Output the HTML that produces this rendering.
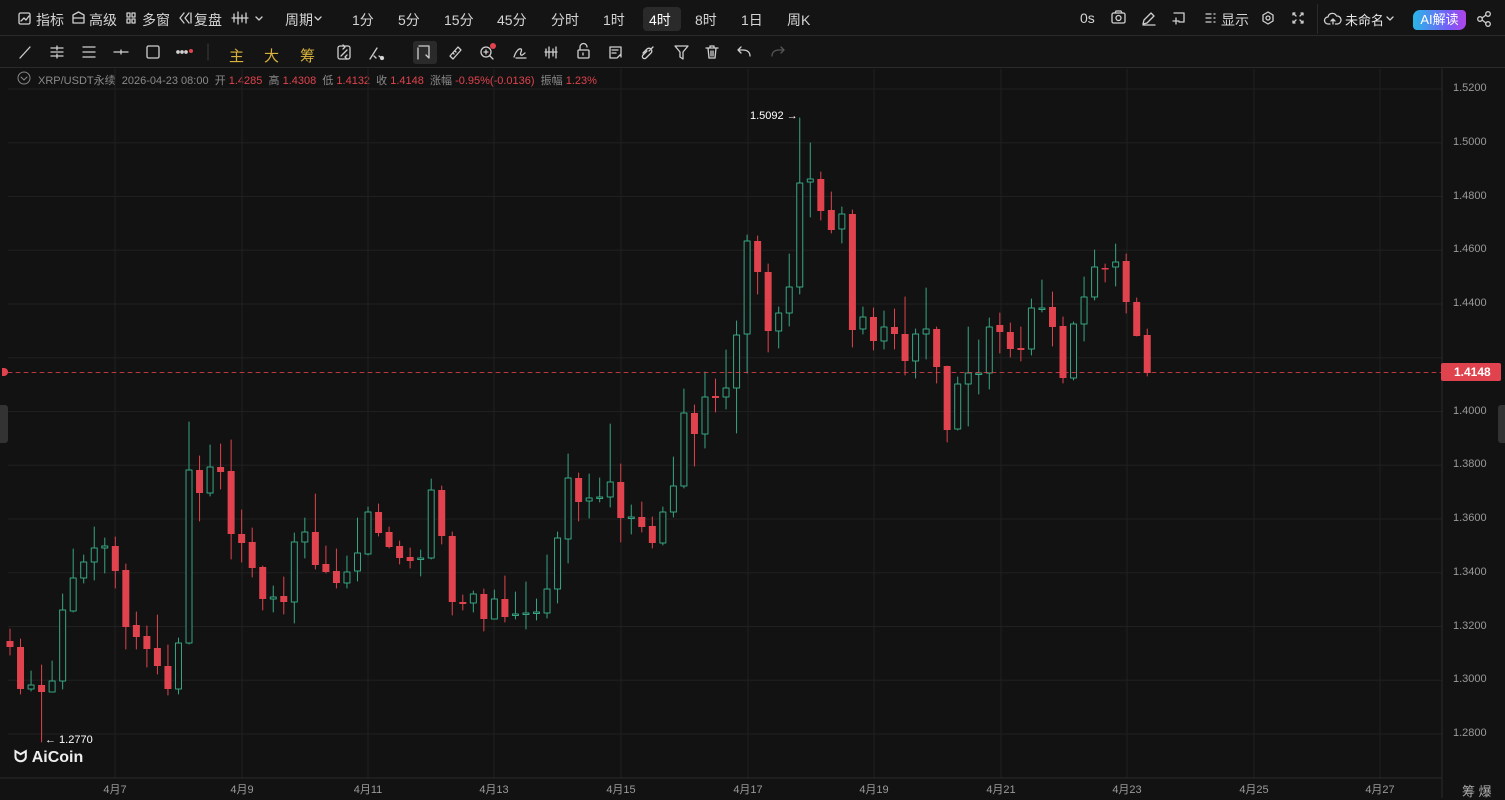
<!DOCTYPE html>
<html><head><meta charset="utf-8">
<style>
*{margin:0;padding:0;box-sizing:border-box}
body{width:1505px;height:798px;background:#121212;overflow:hidden;font-family:"Liberation Sans","Noto Sans CJK SC",sans-serif;color:#d8d8d8;position:relative}
.t{position:absolute;white-space:nowrap}
.r1{top:0;left:0;width:1505px;height:36px;border-bottom:1px solid #2a2a2a;background:#141414}
.r2{top:36px;left:0;width:1505px;height:32px;border-bottom:1px solid #2a2a2a;background:#141414}
.m{font-size:14px;top:10px;color:#d4d4d4}
.y{color:#d9b23c;font-size:15px;top:45px}
svg{position:absolute;left:0;top:0}
</style></head><body>
<div class="t r1"></div><div class="t r2"></div>
<div class="t" style="left:1317px;top:4px;width:1px;height:30px;background:#2a2a2a"></div>
<div class="t" style="left:643px;top:7px;width:38px;height:24px;background:#2a2a2a;border-radius:4px"></div>
<div class="t" style="left:413px;top:41px;width:24px;height:23px;background:#2a2a2a;border-radius:3px"></div>
<div class="t m" style="left:36px">指标</div>
<div class="t m" style="left:89px">高级</div>
<div class="t m" style="left:142px">多窗</div>
<div class="t m" style="left:194px">复盘</div>
<div class="t m" style="left:285px">周期</div>
<div class="t m" style="left:352px">1分</div>
<div class="t m" style="left:398px">5分</div>
<div class="t m" style="left:444px">15分</div>
<div class="t m" style="left:497px">45分</div>
<div class="t m" style="left:551px">分时</div>
<div class="t m" style="left:603px">1时</div>
<div class="t m" style="left:649px;color:#fff">4时</div>
<div class="t m" style="left:695px">8时</div>
<div class="t m" style="left:741px">1日</div>
<div class="t m" style="left:787px">周K</div>
<div class="t m" style="left:1080px">0s</div>
<div class="t m" style="left:1221px">显示</div>
<div class="t m" style="left:1345px;font-size:13px;color:#e8e8e8">未命名</div>
<div class="t" style="left:1413px;top:10px;width:53px;height:20px;border-radius:7px 4px 7px 4px;background:linear-gradient(90deg,#29b6e8,#7a5af8 70%,#b044e8);font-size:13px;color:#fff;text-align:center;line-height:20px">AI解读</div>
<div class="t y" style="left:229px">主</div>
<div class="t y" style="left:264px">大</div>
<div class="t y" style="left:300px">筹</div>
<div class="t" style="left:38px;top:72px;font-size:11px;color:#8a8a8a">XRP/USDT永续&nbsp; 2026-04-23 08:00&nbsp; 开 <span style="color:#e0434d">1.4285</span>&nbsp; 高 <span style="color:#e0434d">1.4308</span>&nbsp; 低 <span style="color:#e0434d">1.4132</span>&nbsp; 收 <span style="color:#e0434d">1.4148</span>&nbsp; 涨幅 <span style="color:#e0434d">-0.95%(-0.0136)</span>&nbsp; 振幅 <span style="color:#e0434d">1.23%</span></div>
<svg width="1505" height="798" id="s" fill="none" stroke="#cfcfcf" stroke-width="1.3" stroke-linecap="round" stroke-linejoin="round">
<rect x="19" y="13" width="11" height="11" rx="1.5"/><path d="M21 21l3-3 2 2 3-4"/>
<path d="M73 23h11v-8l-5.5-3-5.5 3z M73 18h11"/>
<rect x="127" y="13" width="3" height="4"/><rect x="127" y="19" width="3" height="4"/><rect x="132" y="13" width="3" height="4"/><rect x="132" y="19" width="3" height="4"/>
<path d="M184 13l-4 5 4 5 M189 13l-4 5 4 5 M191 13v10"/>
<path d="M234 14v8 M238 12v12 M242 15v7 M246 13v10 M232 18h16"/>
<path d="M256 17l3 3 3-3 M315 17l3 3 3-3 M1387 17l3 3 3-3"/>
<rect x="1112" y="13" width="13" height="10" rx="1.5"/><circle cx="1118.5" cy="18" r="2.5"/><path d="M1115 13l1-2h5l1 2"/>
<path d="M1143 24l1-4 7-7 3 3-7 7z M1143 25h12"/>
<path d="M1174 13h10v9h-5 M1176 18v6 M1173 21h6"/>
<path d="M1206 14h5 M1206 18h5 M1206 22h5 M1214 14h1 M1214 18h1 M1214 22h1"/>
<path d="M1268 12l5 3v6l-5 3-5-3v-6z"/><circle cx="1268" cy="18" r="2"/>
<path d="M1293 15v-2h2 M1301 13h2v2 M1303 21v2h-2 M1295 23h-2v-2 M1294 14l2 2 M1302 14l-2 2 M1302 22l-2-2 M1294 22l2-2"/>
<path d="M1330 24h-2a3.5 3.5 0 0 1 0-7 4.5 4.5 0 0 1 8.5-1 3.5 3.5 0 0 1 1 8h-2 M1333 24v-5 M1331 21l2-2 2 2"/>
<circle cx="1480" cy="19" r="2.3"/><circle cx="1488" cy="14" r="2.3"/><circle cx="1488" cy="24" r="2.3"/><path d="M1482 18l4-3 M1482 20l4 3"/>
<path d="M20 58l10-11"/>
<path d="M51 48h12 M51 52h12 M51 56h12 M57 46v4 M57 54v4"/>
<path d="M83 47h12 M83 52h12 M83 57h12"/>
<path d="M114 52h14 M121 50v4"/>
<rect x="147" y="46" width="12" height="12" rx="1.5"/>
<circle cx="178" cy="52" r="1.2" fill="#ddd"/><circle cx="182" cy="52" r="1.2" fill="#ddd"/><circle cx="186" cy="52" r="1.2" fill="#ddd"/><circle cx="191" cy="51" r="2" fill="#e0434d" stroke="none"/>
<path d="M208 44v16" stroke="#333"/>
<rect x="338" y="46" width="12" height="13" rx="2"/><path d="M341 56l6-6 M343 45l2 2-2 2 M347 59l-2-2 2-2"/>
<path d="M370 59l7-11 M374 56l2 2 M379 56l4 3" /><circle cx="382" cy="58" r="1.5" fill="#ddd"/>
<path d="M419 46h10v12l-3-3 M418 48v11"/>
<path d="M450 56l8-9 3 3-8 9z M453 53l1 1 M455 51l1 1"/>
<circle cx="486" cy="52" r="5"/><path d="M490 56l3 3 M484 52h4 M486 50v4"/><circle cx="493" cy="46" r="3" fill="#e0434d" stroke="none"/>
<path d="M514 57c2-6 5-9 7-8s-2 5 0 6 3-2 4-2 M516 58h10"/>
<path d="M546 49v7 M549 47v11 M553 49v7 M556 47v11 M545 52h12"/>
<rect x="578" y="50" width="11" height="8" rx="1"/><path d="M580 50v-3a3.5 3.5 0 0 1 7 0 M583 53v2"/>
<path d="M621 57v-10h-11v11h6 M612 50h6 M612 53h4 M617 58l4-4"/>
<path d="M643 53l4-4a2.5 2.5 0 0 1 4 4l-5 5a2 2 0 0 1-3-3l4-4 M649 51l4-4"/>
<path d="M675 46h13l-5 6v7l-3-2v-5z"/>
<path d="M706 48h12 M710 48v-2h4v2 M708 48l1 10h6l1-10 M711 51v5 M713 51v5"/>
<path d="M750 56c0-4-3-6-7-6h-5 M741 47l-3 3 3 3"/>
<path d="M772 56c0-4 3-6 7-6h5 M781 47l3 3-3 3" stroke="#555"/>
<circle cx="24" cy="78" r="6" stroke="#888" stroke-width="1"/>
<path d="M21 77l3 3 3-3" stroke="#888" stroke-width="1"/>
<g id="g"></g>
</svg>
<script>
const g=document.getElementById('g');let h='';
for(let k=0;k<13;k++){let y=89+53.75*k;h+=`<line x1="8" x2="1442" y1="${y}" y2="${y}" stroke="#202020" stroke-width="1"/>`;}
const vx=[115,242,368,494,621,748,874,1001,1127,1254,1380];
vx.forEach(x=>h+=`<line x1="${x}" x2="${x}" y1="69" y2="778" stroke="#202020" stroke-width="1"/>`);
h+=`<line x1="1442" x2="1442" y1="69" y2="798" stroke="#2a2a2a" stroke-width="1"/><line x1="0" x2="1442" y1="778" y2="778" stroke="#2a2a2a" stroke-width="1"/>`;
const D=[[641,647,629,655,0],[647,689,639,694,0],[689,685,671,691,1],[685,692,665,742,0],[692,681,661,692,1],[681,610,594,689,1],[611,578,549,612,1],[578,562,555,583,1],[562,548,527,580,1],[548,546,538,573,1],[546,571,537,588,0],[570,627,564,649,0],[625,637,612,649,0],[636,649,626,667,0],[648,666,615,674,0],[666,689,645,695,0],[689,643,638,694,1],[643,470,422,644,1],[470,493,456,521,0],[493,467,445,496,1],[467,472,444,489,0],[471,534,440,559,0],[534,543,510,562,0],[542,568,528,577,0],[567,599,566,610,0],[599,597,586,612,1],[596,602,577,614,0],[602,542,533,623,1],[542,532,518,558,1],[532,565,494,569,0],[564,572,546,573,0],[571,583,549,588,0],[583,572,556,588,1],[571,553,518,581,1],[554,512,507,555,1],[512,533,504,536,0],[532,547,527,548,0],[546,558,541,564,0],[557,561,548,568,0],[559,558,550,576,1],[558,490,479,559,1],[490,536,486,544,0],[536,602,532,615,0],[602,604,595,610,0],[603,594,591,612,1],[594,619,589,631,0],[619,599,590,618,1],[599,617,576,622,0],[615,614,592,619,1],[614,613,582,629,1],[613,612,599,620,1],[613,589,555,618,1],[589,538,532,603,1],[539,478,454,563,1],[478,502,473,521,0],[501,498,474,518,1],[498,497,478,502,1],[497,482,424,507,1],[482,518,464,542,0],[518,517,505,534,1],[517,527,502,532,0],[526,543,517,548,0],[543,512,507,545,1],[512,486,457,517,1],[486,413,389,488,1],[413,434,405,466,0],[434,397,372,448,1],[396,398,379,412,0],[397,388,350,409,1],[388,335,321,433,1],[334,241,235,373,1],[241,272,236,294,0],[272,331,264,352,0],[331,313,307,348,1],[313,287,254,326,1],[287,183,118,294,1],[182,179,143,217,1],[179,211,172,220,0],[210,230,192,233,0],[229,214,207,243,1],[214,330,210,347,0],[329,317,307,334,1],[317,341,308,350,0],[341,327,311,349,1],[327,334,309,349,0],[334,361,297,375,0],[361,334,329,378,1],[334,329,288,359,1],[329,367,327,383,0],[366,430,366,442,0],[429,384,377,430,1],[384,373,327,426,1],[374,373,340,394,1],[373,327,318,389,1],[325,332,313,353,0],[332,349,323,357,0],[348,350,327,361,0],[349,308,299,355,1],[309,308,280,312,1],[307,327,292,346,0],[326,378,317,383,0],[378,324,322,380,1],[324,297,277,341,1],[297,267,250,300,1],[268,269,264,282,0],[267,262,244,286,1],[261,302,254,313,0],[302,336,298,336,0],[335,373,329,376,0]];
const G='#37a583',R='#e0434d';
D.forEach((d,i)=>{const x=10+10.53*i;let t=Math.min(d[0],d[1]),b=Math.max(d[0],d[1]);if(b-t<1.5)b=t+1.5;const c=d[4]?G:R;
h+=`<line x1="${x}" x2="${x}" y1="${d[2]}" y2="${t}" stroke="${c}" stroke-width="1"/><line x1="${x}" x2="${x}" y1="${b}" y2="${d[3]}" stroke="${c}" stroke-width="1"/>`;
if(d[4])h+=`<rect x="${x-3}" y="${t}" width="6" height="${b-t}" stroke="${c}" stroke-width="1" fill="#121212"/>`;
else h+=`<rect x="${x-3.5}" y="${t}" width="7" height="${b-t}" fill="${c}" stroke="none"/>`;});
h+=`<line x1="8" x2="1442" y1="372.5" y2="372.5" stroke="#e0434d" stroke-width="1" stroke-dasharray="4 4" opacity=".8"/>`;
g.innerHTML=h;
</script>
<div class="t" style="left:0;top:405px;width:8px;height:38px;background:#333;border-radius:0 3px 3px 0"></div>
<div class="t" style="left:1498px;top:405px;width:7px;height:38px;background:#333;border-radius:3px 0 0 3px"></div>
<div class="t" style="left:2px;top:368px;width:6px;height:8px;background:#e0434d;border-radius:0 4px 4px 0"></div>
<div class="t" style="left:1441px;top:363px;width:60px;height:18px;background:#e0434d;border-radius:2px;color:#fff;font-size:12px;font-weight:bold;line-height:18px;padding-left:13px">1.4148</div>
<div class="t" style="left:750px;top:110px;font-size:11px;color:#fff">1.5092 →</div>
<div class="t" style="left:45px;top:734px;font-size:11px;color:#fff">← 1.2770</div>
<div class="t" style="left:14px;top:749px;font-size:16px;font-weight:bold;color:#eee">ᗢ AiCoin</div>
<div id="ax"></div>
<script>
let a='';['1.5200','1.5000','1.4800','1.4600','1.4400','1.4200','1.4000','1.3800','1.3600','1.3400','1.3200','1.3000','1.2800'].forEach((p,k)=>{if(k!=5)a+=`<div class="t" style="left:1453px;top:${82+53.75*k}px;font-size:11px;color:#9a9a9a">${p}</div>`});
['4月7','4月9','4月11','4月13','4月15','4月17','4月19','4月21','4月23','4月25','4月27'].forEach((d,i)=>{const x=[115,242,368,494,621,748,874,1001,1127,1254,1380][i];a+=`<div class="t" style="left:${x-30}px;width:60px;text-align:center;top:781px;font-size:11px;color:#9a9a9a">${d}</div>`});
a+=`<div class="t" style="left:1462px;top:781px;font-size:13px;color:#aaa">筹 爆</div>`;
document.getElementById('ax').innerHTML=a;
</script>
</body></html>
